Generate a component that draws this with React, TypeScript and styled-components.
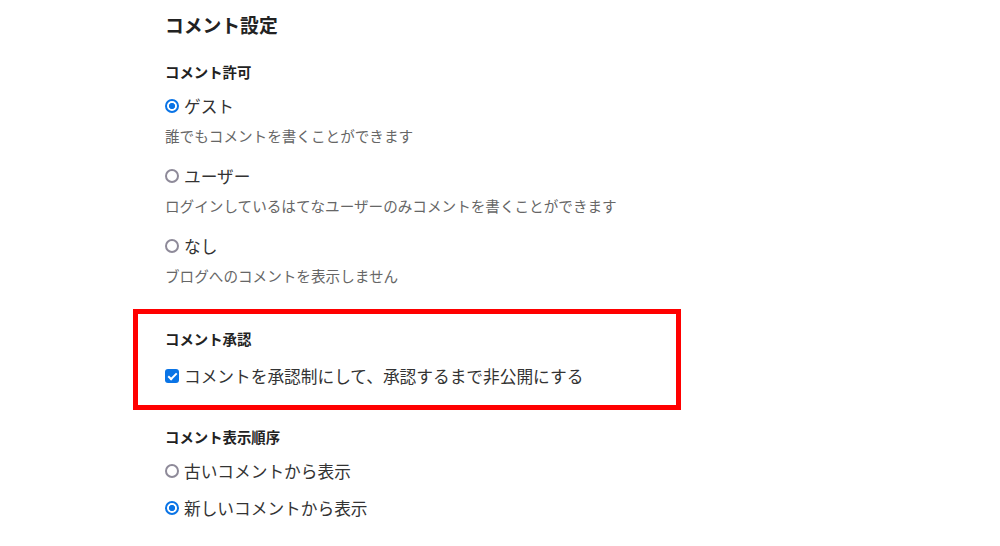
import React from "react";
import styled, { createGlobalStyle } from "styled-components";

const GlobalStyle = createGlobalStyle`
    body {
        margin: 0;
        background: #fff;
        font-family: "Noto Sans CJK JP", "Noto Sans", sans-serif;
        color: #222;
    }
`;

const Page = styled.div`
    width: 548px;
    margin-left: 133px;
    padding-top: 10px;
`;

const Title = styled.h2`
    margin: 0;
    padding-left: 32px;
    font-size: 18.8px;
    line-height: 30px;
    font-weight: 700;
    color: #222;
`;

const Section = styled.section<{ $highlight?: boolean; $top?: number }>`
    display: flex;
    flex-direction: column;
    margin-top: ${(p) => p.$top ?? 22}px;
    padding: ${(p) => (p.$highlight ? "15px 27px 17px" : "0 32px")};
    border: ${(p) => (p.$highlight ? "5px solid #ff0000" : "none")};
`;

const Label = styled.h3<{ $below?: number }>`
    margin: 0 0 ${(p) => p.$below ?? 12}px;
    font-size: 14.4px;
    line-height: 20px;
    font-weight: 700;
    color: #222;
`;

const Option = styled.label<{ $gap?: number }>`
    display: flex;
    align-items: center;
    gap: 5px;
    margin-top: ${(p) => p.$gap ?? 0}px;
    font-size: 16.7px;
    line-height: 24px;
    color: #333;
`;

const Radio = styled.input.attrs({ type: "radio" })`
    appearance: none;
    margin: 0;
    width: 14px;
    height: 14px;
    border-radius: 50%;
    border: 2px solid #8e8a99;
    box-sizing: border-box;
    flex-shrink: 0;

    &:checked {
        border: 2px solid #0a74e6;
        background: radial-gradient(circle, #0a74e6 0 2.8px, #fff 3.3px);
    }
`;

const CheckBox = styled.input.attrs({ type: "checkbox" })`
    appearance: none;
    margin: 0;
    width: 14px;
    height: 14px;
    border-radius: 3px;
    background: #0a74e6;
    flex-shrink: 0;
    display: grid;
    place-items: center;

    &::after {
        content: "";
        width: 3px;
        height: 7px;
        border: solid #fff;
        border-width: 0 2px 2px 0;
        transform: translateY(-1px) rotate(45deg);
    }
`;

const Desc = styled.p`
    margin: 8px 0 0;
    font-size: 14.6px;
    line-height: 20px;
    color: #666;
`;

const permissions = [
    { label: "ゲスト", desc: "誰でもコメントを書くことができます", checked: true },
    { label: "ユーザー", desc: "ログインしているはてなユーザーのみコメントを書くことができます", checked: false },
    { label: "なし", desc: "ブログへのコメントを表示しません", checked: false },
];

const App: React.FC = () => {
    return (
        <>
            <GlobalStyle />
            <Page>
                <Title>コメント設定</Title>

                <Section>
                    <Label>コメント許可</Label>
                    {permissions.map((p, i) => (
                        <React.Fragment key={p.label}>
                            <Option $gap={i === 0 ? 0 : 18}>
                                <Radio name="permit" defaultChecked={p.checked} />
                                {p.label}
                            </Option>
                            <Desc>{p.desc}</Desc>
                        </React.Fragment>
                    ))}
                </Section>

                <Section $highlight $top={23}>
                    <Label $below={15}>コメント承認</Label>
                    <Option>
                        <CheckBox defaultChecked />
                        コメントを承認制にして、承認するまで非公開にする
                    </Option>
                </Section>

                <Section $top={17}>
                    <Label>コメント表示順序</Label>
                    <Option>
                        <Radio name="order" />
                        古いコメントから表示
                    </Option>
                    <Option $gap={13}>
                        <Radio name="order" defaultChecked />
                        新しいコメントから表示
                    </Option>
                </Section>
            </Page>
        </>
    );
};

export default App;
